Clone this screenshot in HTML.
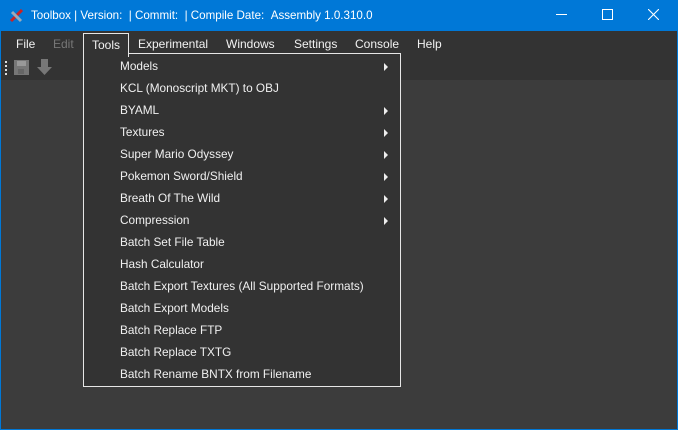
<!DOCTYPE html>
<html><head><meta charset="utf-8"><style>
*{margin:0;padding:0;box-sizing:border-box}
body{width:678px;height:430px;overflow:hidden;background:#0078d7;font-family:"Liberation Sans",sans-serif;position:relative}
#title{position:absolute;left:0;top:0;width:678px;height:31px;background:#0078d7;color:#fff;font-size:11.6px}
#title .t{position:absolute;left:31px;top:9px;white-space:nowrap}
#client{position:absolute;left:1px;top:31px;width:676px;height:398px;background:#3c3c3c}
#menubar{position:absolute;left:0;top:0;width:676px;height:26px;background:#333}
#toolbar{position:absolute;left:0;top:26px;width:676px;height:23px;background:#333}
.mi{position:absolute;top:6px;color:#f2f2f2;font-size:12px}
#tools{position:absolute;left:82px;top:2px;width:46px;height:24px;border:1px solid #e6e6e6;border-bottom:none;background:#333;z-index:3}
#pop{position:absolute;left:82px;top:22px;width:318px;height:334px;border:1px solid #e6e6e6;background:#333;z-index:2}
.it{position:absolute;left:36px;color:#f0f0f0;font-size:11.8px;white-space:nowrap}
.ar{position:absolute;left:300px;width:0;height:0;border-top:4px solid transparent;border-bottom:4px solid transparent;border-left:4px solid #eee}
</style></head><body>
<div id="title">
<svg style="position:absolute;left:9px;top:8px" width="16" height="16" viewBox="0 0 16 16"><path d="M2 13 L13 2" stroke="#c22" stroke-width="3"/><path d="M3 4 L12 13" stroke="#9ab" stroke-width="3"/></svg>
<span class="t">Toolbox | Version: &nbsp;| Commit: &nbsp;| Compile Date: &nbsp;Assembly 1.0.310.0</span>
<svg style="position:absolute;left:556px;top:14px" width="11" height="2"><rect width="11" height="1" fill="#fff"/></svg>
<svg style="position:absolute;left:602px;top:9px" width="11" height="11"><rect x="0.5" y="0.5" width="10" height="10" fill="none" stroke="#fff"/></svg>
<svg style="position:absolute;left:648px;top:9px" width="11" height="11"><path d="M0 0L11 11M11 0L0 11" stroke="#fff" stroke-width="1.1"/></svg>
</div>
<div id="client">
<div id="menubar">
<span class="mi" style="left:15px">File</span>
<span class="mi" style="left:52px;color:#777">Edit</span>
<span class="mi" style="left:137px">Experimental</span>
<span class="mi" style="left:225px">Windows</span>
<span class="mi" style="left:293px">Settings</span>
<span class="mi" style="left:354px">Console</span>
<span class="mi" style="left:416px">Help</span>
</div>
<div id="tools"><span class="mi" style="left:8px;top:4px">Tools</span></div>
<div id="toolbar">
<svg style="position:absolute;left:4px;top:3px" width="3" height="17"><g fill="#ddd"><rect y="1" width="2" height="2"/><rect y="5" width="2" height="2"/><rect y="9" width="2" height="2"/><rect y="13" width="2" height="2"/></g></svg>
<svg style="position:absolute;left:13px;top:3px" width="16" height="16"><rect width="15" height="15" fill="#777"/><rect x="3" y="1" width="9" height="5" fill="#999"/><rect x="4" y="9" width="6" height="5" fill="#666"/></svg>
<svg style="position:absolute;left:36px;top:2px" width="16" height="17"><path d="M4 0H11V8H15L7.5 16L0 8H4Z" fill="#777"/></svg>
</div>
<div id="pop">
<span class="it" style="top:5px">Models</span><i class="ar" style="top:9px"></i>
<span class="it" style="top:27px">KCL (Monoscript MKT) to OBJ</span>
<span class="it" style="top:49px">BYAML</span><i class="ar" style="top:53px"></i>
<span class="it" style="top:71px">Textures</span><i class="ar" style="top:75px"></i>
<span class="it" style="top:93px">Super Mario Odyssey</span><i class="ar" style="top:97px"></i>
<span class="it" style="top:115px">Pokemon Sword/Shield</span><i class="ar" style="top:119px"></i>
<span class="it" style="top:137px">Breath Of The Wild</span><i class="ar" style="top:141px"></i>
<span class="it" style="top:159px">Compression</span><i class="ar" style="top:163px"></i>
<span class="it" style="top:181px">Batch Set File Table</span>
<span class="it" style="top:203px">Hash Calculator</span>
<span class="it" style="top:225px">Batch Export Textures (All Supported Formats)</span>
<span class="it" style="top:247px">Batch Export Models</span>
<span class="it" style="top:269px">Batch Replace FTP</span>
<span class="it" style="top:291px">Batch Replace TXTG</span>
<span class="it" style="top:313px">Batch Rename BNTX from Filename</span>
</div>
</div>
</body></html>
